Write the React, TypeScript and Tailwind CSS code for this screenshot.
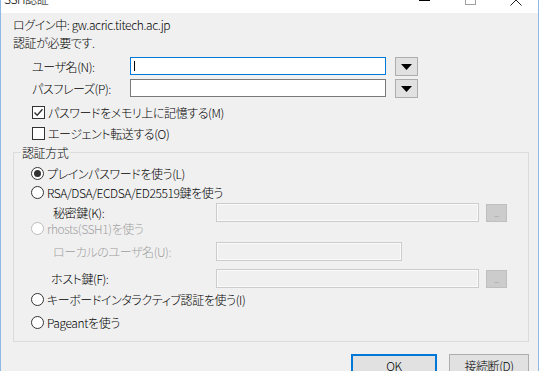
import React from 'react'

const font = "font-['Noto_Sans_CJK_JP','Noto_Sans',sans-serif] [font-feature-settings:'palt'] font-light tracking-[-0.4px]"

function DropButton() {
  return (
    <div className="ml-[9px] flex h-[19px] w-[23px] items-center justify-center border border-[#adadad] bg-[#e1e1e1]">
      <svg width="11" height="6" viewBox="0 0 11 6" className="mt-[1px]">
        <polygon points="0,0 11,0 5.5,6" fill="#000" />
      </svg>
    </div>
  )
}

function Checkbox({ checked, label }: { checked?: boolean; label: string }) {
  return (
    <div className="flex h-[21px] items-center pl-[19px]">
      <div className="flex h-[13px] w-[13px] items-center justify-center border border-[#333] bg-white">
        {checked && (
          <svg width="11" height="11" viewBox="0 0 11 11">
            <path d="M1.5 5.5 L4.2 8.3 L9.5 2.2" stroke="#333" strokeWidth="1.4" fill="none" />
          </svg>
        )}
      </div>
      <span className="ml-[3px]">{label}</span>
    </div>
  )
}

function Radio({ checked, disabled, label, h }: { checked?: boolean; disabled?: boolean; label: string; h: string }) {
  return (
    <div className={`flex items-center pl-[17px] ${h}`}>
      <div
        className={`flex h-[13px] w-[13px] items-center justify-center rounded-full border bg-white ${
          disabled ? 'border-[#bcbcbc]' : 'border-[#333]'
        }`}
      >
        {checked && <div className="h-[7px] w-[7px] rounded-full bg-[#333]" />}
      </div>
      <span className={`ml-[3px] ${disabled ? 'text-[#a0a0a0]' : ''}`}>{label}</span>
    </div>
  )
}

function DisabledField({ w }: { w: string }) {
  return <div className={`h-[19px] ${w} border border-[#cccccc] bg-[#f0f0f0] shadow-[inset_0_0_0_1px_#fafafa]`} />
}

function DotsButton() {
  return (
    <div className="ml-[7px] flex h-[18px] w-[21px] items-end justify-center border border-[#bfbfbf] bg-[#cccccc] pb-[3px] text-[8px] leading-none text-[#838383]">
      ...
    </div>
  )
}

export default function App() {
  return (
    <div className={`flex h-[371px] w-[539px] flex-col overflow-hidden border-x border-[#8fb8e6] text-[12px] leading-[17px] text-black ${font}`}>
      {/* title bar */}
      <div className="relative h-[13px] shrink-0 overflow-hidden bg-white">
        <span className="ml-[3px] block -mt-[10px] text-[12px]">SSH認証</span>
        <div className="absolute left-[418px] top-0 h-[1px] w-[11px] bg-black" />
        <div className="absolute left-[464px] -top-[6px] h-[11px] w-[11px] border border-[#a0a0a0]" />
        <svg className="absolute left-[509px] top-0" width="12" height="6" viewBox="0 0 12 6">
          <path d="M0.5 5.5 L6 0 L11.5 5.5" stroke="#222" strokeWidth="1" fill="none" />
        </svg>
      </div>

      {/* body */}
      <div className="flex flex-1 flex-col bg-[#f0f0f0] pl-[12px] pt-[2px]">
        <div className="flex h-[18px] items-center">ログイン中: gw.acric.titech.ac.jp</div>
        <div className="flex h-[18px] items-center">認証が必要です.</div>

        <div className="mt-[6px] flex h-[18px] items-center">
          <span className="w-[117px] pl-[19px]">ユーザ名(N):</span>
          <div className="flex h-[18px] w-[256px] items-center border border-[#0078d7] bg-white pl-[3px]">
            <div className="h-[10px] w-[1px] bg-black" />
          </div>
          <DropButton />
        </div>
        <div className="mt-[4px] flex h-[18px] items-center">
          <span className="w-[117px] pl-[19px]">パスフレーズ(P):</span>
          <div className="h-[18px] w-[256px] border border-[#7a7a7a] bg-white" />
          <DropButton />
        </div>

        <div className="mt-[5px]">
          <Checkbox checked label="パスワードをメモリ上に記憶する(M)" />
          <Checkbox label="エージェント転送する(O)" />
        </div>

        <fieldset className="w-[516px] border border-[#dcdcdc] pb-[6px]">
          <legend className="ml-[7px] px-[1px]">認証方式</legend>
          <div className="flex flex-col pt-[3px]">
            <Radio checked h="h-[19px]" label="プレインパスワードを使う(L)" />
            <Radio h="h-[19px]" label="RSA/DSA/ECDSA/ED25519鍵を使う" />
            <div className="flex h-[21px] items-center">
              <span className="w-[202px] pl-[39px]">秘密鍵(K):</span>
              <DisabledField w="w-[263px]" />
              <DotsButton />
            </div>
            <Radio disabled h="h-[10px]" label="rhosts(SSH1)を使う" />
            <div className="flex h-[36px] items-center">
              <span className="w-[202px] pl-[39px] text-[#a0a0a0]">ローカルのユーザ名(U):</span>
              <DisabledField w="w-[186px]" />
            </div>
            <div className="flex h-[19px] items-center">
              <span className="w-[202px] pl-[37px]">ホスト鍵(F):</span>
              <DisabledField w="w-[263px]" />
              <DotsButton />
            </div>
            <Radio h="h-[22px]" label="キーボードインタラクティブ認証を使う(I)" />
            <Radio h="h-[25px]" label="Pageantを使う" />
          </div>
        </fieldset>

        <div className="mt-[12px] flex w-[516px] justify-end gap-[12px]">
          <button className="h-[23px] w-[86px] border-2 border-[#0078d7] bg-[#e1e1e1] text-[12px] leading-[17px]">
            OK
          </button>
          <button className="h-[23px] w-[80px] border border-[#adadad] bg-[#e1e1e1] text-[12px] leading-[17px]">
            接続断(D)
          </button>
        </div>
      </div>
    </div>
  )
}
